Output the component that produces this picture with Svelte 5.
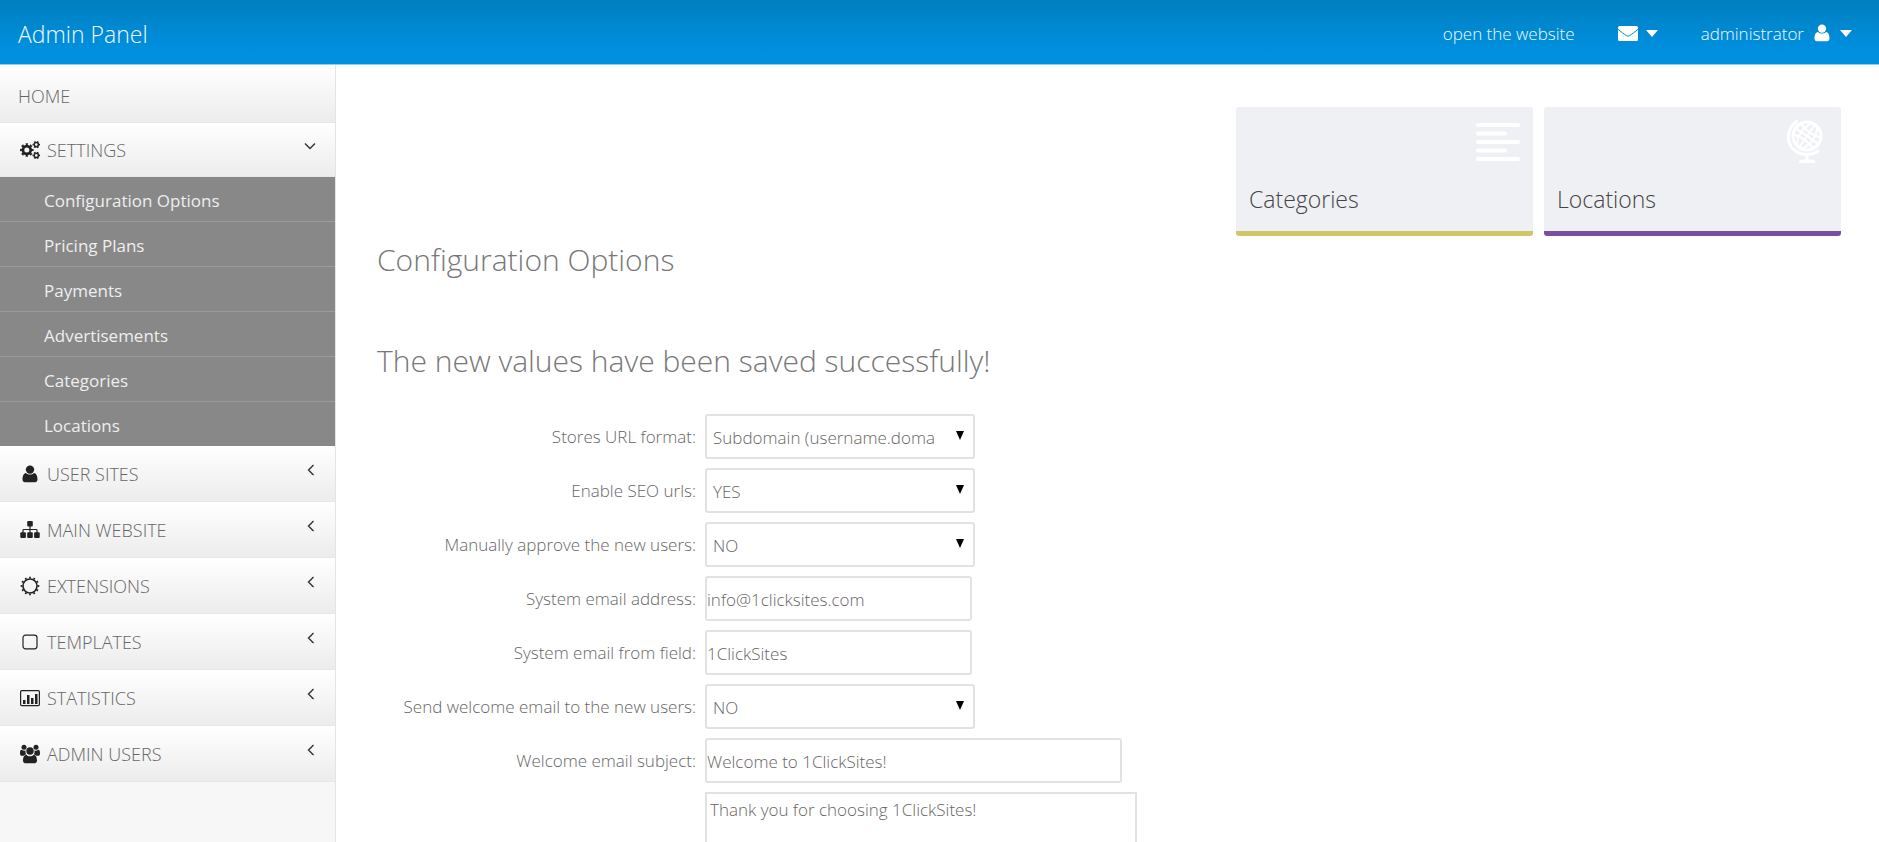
<script>
const subItems = ['Configuration Options', 'Pricing Plans', 'Payments', 'Advertisements', 'Categories', 'Locations'];
const menu = [
    { icon: 'user', title: 'USER SITES' },
    { icon: 'sitemap', title: 'MAIN WEBSITE' },
    { icon: 'ring', title: 'EXTENSIONS' },
    { icon: 'square', title: 'TEMPLATES' },
    { icon: 'chart', title: 'STATISTICS' },
    { icon: 'group', title: 'ADMIN USERS' }
];
const fields = [
    { id: 'url_format', label: 'Stores URL format:', type: 'select', value: 'Subdomain (username.domain.com)' },
    { id: 'seo', label: 'Enable SEO urls:', type: 'select', value: 'YES' },
    { id: 'approve', label: 'Manually approve the new users:', type: 'select', value: 'NO' },
    { id: 'email', label: 'System email address:', type: 'text', value: 'info@1clicksites.com' },
    { id: 'from', label: 'System email from field:', type: 'text', value: '1ClickSites' },
    { id: 'send_welcome', label: 'Send welcome email to the new users:', type: 'select', value: 'NO' },
    { id: 'subject', label: 'Welcome email subject:', type: 'text', wide: true, value: 'Welcome to 1ClickSites!' },
    { id: 'message', label: '', type: 'textarea', value: 'Thank you for choosing 1ClickSites!' }
];
</script>

{#snippet icon(name)}
    <svg class="icon" viewBox="0 0 20 20" aria-hidden="true">
        {#if name === 'user'}
            <circle cx="10" cy="5.6" r="4.2" />
            <path d="M6 9C3.300 9.600 2.500 12.400 2.500 15.400c0 1.600 1 2.800 2.500 2.800h10c1.500 0 2.500-1.200 2.500-2.800 0-3-.8-5.800-3.500-6.400-2.300 2-5.700 2-8 0z" />
        {:else if name === 'sitemap'}
            <rect x="7.200" y="1" width="5.600" height="5.600" rx="1" />
            <rect x="0.300" y="12.300" width="5.600" height="5.600" rx="1" />
            <rect x="7.200" y="12.300" width="5.600" height="5.600" rx="1" />
            <rect x="14.100" y="12.300" width="5.600" height="5.600" rx="1" />
            <path class="line" d="M10 6v7M3 13V10.300q0-.8.8-.8h12.400q.8 0 .8.8V13" />
        {:else if name === 'ring'}
            <circle class="line" cx="10" cy="10" r="7" stroke-width="1.6" />
            <circle class="line" cx="10" cy="10" r="8.4" stroke-width="1.8" pathLength="120" stroke-dasharray="4 6" stroke-dashoffset="2" />
        {:else if name === 'square'}
            <rect class="line" x="3" y="3.200" width="14" height="13.600" rx="2.5" />
        {:else if name === 'chart'}
            <rect class="line" x=".6" y="2.600" width="18.800" height="15" rx="1.2" />
            <path d="M3 12h2.500v4H3zM7 7h2.500v9H7zM11 10h2.500v6H11zM15 6h2.500v10H15z" />
        {:else if name === 'group'}
            <circle cx="4" cy="3.200" r="2.5" />
            <circle cx="16" cy="3.200" r="2.5" />
            <circle cx="10" cy="7" r="3.7" />
            <path d="M0 9.500C0 7.500.3 5.800 1.600 5.800c1.300 1 3 1 4 .8-.5 1.500 0 3 .9 4-1.200 0-2 .4-2.700 1.200H1.800C.7 11.800 0 11 0 9.500zM20 9.500c0-2-.3-3.700-1.600-3.700-1.300 1-3 1-4 .8.5 1.500 0 3-.9 4 1.200 0 2 .4 2.700 1.200h2c1.100 0 1.800-.8 1.800-2.300z" />
            <path d="M6.200 10.800C3.800 11.200 3 14 3 16.500 3 18.200 4 19.300 5.600 19.300h8.800c1.600 0 2.600-1.100 2.600-2.800 0-2.500-.8-5.300-3.200-5.700-2.200 2-5.400 2-7.600 0z" />
        {:else if name === 'cogs'}
            <circle class="line" cx="6.800" cy="10" r="3.9" stroke-width="2.800" />
            <circle class="line" cx="6.800" cy="10" r="5.8" stroke-width="2" pathLength="80" stroke-dasharray="5 5" stroke-dashoffset="2.5" />
            <circle class="line" cx="16.300" cy="4.600" r="2.1" stroke-width="1.5" />
            <circle class="line" cx="16.300" cy="4.600" r="3.2" stroke-width="1.200" pathLength="60" stroke-dasharray="5 5" stroke-dashoffset="2.5" />
            <circle class="line" cx="16.300" cy="15.400" r="2.1" stroke-width="1.5" />
            <circle class="line" cx="16.300" cy="15.400" r="3.2" stroke-width="1.200" pathLength="60" stroke-dasharray="5 5" stroke-dashoffset="2.5" />
        {/if}
    </svg>
{/snippet}

<header>
    <a class="brand" href="#home">Admin Panel</a>
    <nav class="top-links">
        <a href="#website">open the website</a>
        <button aria-label="Messages">
            <svg width="20" height="15" viewBox="0 0 20 15">
                <rect width="20" height="15" rx="1.5" />
                <path class="fold" d="M0 3.200C3 6 6.500 8.200 8.500 9.700q1.500 1 3 0C13.500 8.200 17 6 20 3.200" />
            </svg>
            <span class="caret"></span>
        </button>
        <button>
            administrator
            {@render icon('user')}
            <span class="caret"></span>
        </button>
    </nav>
</header>

<div class="page">
    <aside>
        <a class="item home" href="#home">HOME</a>
        <button class="item open">
            {@render icon('cogs')}
            SETTINGS
            <svg class="arrow" viewBox="0 0 12 12"><path d="M1 3.500l5 5 5-5" /></svg>
        </button>
        <ul>
            {#each subItems as item}
            <li><a href="#{item}">{item}</a></li>
            {/each}
        </ul>
        {#each menu as item}
        <button class="item">
            {@render icon(item.icon)}
            {item.title}
            <svg class="arrow" viewBox="0 0 12 12"><path d="M9.500 1l-5 5 5 5" /></svg>
        </button>
        {/each}
    </aside>

    <main>
        <div class="tiles">
            <a class="tile yellow" href="#categories">
                <svg viewBox="0 0 44 44">
                    <path class="lines" d="M2 6h40M2 14.500h27M2 23h40M2 31.500h27M2 40h40" />
                </svg>
                <span>Categories</span>
            </a>
            <a class="tile purple" href="#locations">
                <svg viewBox="0 0 44 44">
                    <circle class="globe" cx="23" cy="17" r="14" />
                    <g class="grid" transform="rotate(35 23 17)">
                        <ellipse cx="23" cy="17" rx="7" ry="14" />
                        <path d="M23 3v28M9 17h28M11 10.500q12 4 24 0M11 23.500q12-4 24 0" />
                    </g>
                    <path class="stand" d="M12.500 2.500C2 10 2 25 11 31.500c7 5.500 17 5 23 .5M23 36v5" />
                    <path class="base" d="M15 44q0-3.500 3.500-3.500h9.500q3.500 0 3.500 3.500z" />
                </svg>
                <span>Locations</span>
            </a>
        </div>

        <h2>Configuration Options</h2>
        <h2>The new values have been saved successfully!</h2>

        <form>
            {#each fields as field}
            <div class="row">
                <label for={field.id}>{field.label}</label>
                {#if field.type === 'select'}
                <div class="select">
                    <select id={field.id}>
                        <option>{field.value}</option>
                    </select>
                </div>
                {:else if field.type === 'text'}
                <input id={field.id} type="text" class:wide={field.wide} value={field.value}>
                {:else}
                <textarea id={field.id} aria-label="Welcome email message" value={field.value}></textarea>
                {/if}
            </div>
            {/each}
        </form>
    </main>
</div>

<style>
:global(body) {
    background: #fff;
    color: #666;
    font-family: "Open Sans", "Noto Sans", sans-serif;
    font-size: 17px;
    font-weight: 300;
}

:global(#app) {
    height: 100vh;
    display: flex;
    flex-direction: column;
    overflow: hidden;
}

a {
    color: inherit;
    text-decoration: none;
}

button, input, select, textarea {
    font: inherit;
    color: inherit;
    box-sizing: border-box;
}

button {
    background: none;
    border: 0;
    padding: 0;
    cursor: pointer;
}

.icon {
    width: 20px;
    height: 20px;
    fill: #222;
    stroke-width: 1.2;
}

.line {
    fill: none;
    stroke: #222;
}

header {
    display: flex;
    justify-content: space-between;
    align-items: center;
    flex: none;
    height: 64px;
    padding: 0 27px 0 18px;
    border-bottom: 1px solid #8fd0f2;
    background: linear-gradient(#007fbf, #0090e0 80%);
    color: #f0faff;
}

.brand {
    font-size: 23px;
    padding-top: 4px;
}

.top-links {
    display: flex;
    align-items: center;
    gap: 43px;
    padding-top: 2px;
}

.top-links button {
    display: flex;
    align-items: center;
    gap: 8px;
}

.top-links svg {
    fill: #fff;
}

.fold {
    fill: none;
    stroke: #0089d2;
}

.caret {
    border: 6px solid transparent;
    border-top: 7px solid #fff;
    border-bottom: 0;
}

.page {
    display: flex;
    flex: 1;
    min-height: 0;
}

aside {
    flex: none;
    width: 335px;
    border-right: 1px solid #e4e4e4;
    background: #f7f7f7;
}

.item {
    display: flex;
    align-items: center;
    gap: 7px;
    width: 100%;
    height: 56px;
    padding: 1px 19px 0 20px;
    box-sizing: border-box;
    border-bottom: 1px solid #e7e7e7;
    background: linear-gradient(#fff, #ececec);
    font-size: 18px;
    text-align: left;
}

.home {
    height: 58px;
    padding: 4px 18px 0;
}

.open {
    height: 54px;
}

.arrow {
    width: 12px;
    height: 12px;
    margin: 0 0 8px auto;
    fill: none;
    stroke: #333;
    stroke-width: 1.4;
}

ul {
    list-style: none;
    margin: 0;
    padding: 0;
    background: #888;
    color: #eee;
    font-weight: 400;
}

li {
    height: 45px;
    padding: 1px 0 0 44px;
    box-sizing: border-box;
    border-bottom: 1px solid #9b9b9b;
    line-height: 45px;
}

li:last-child {
    height: 44px;
    border-bottom: 0;
}

main {
    flex: 1;
    padding: 42px 38px 0 41px;
}

.tiles {
    display: flex;
    justify-content: flex-end;
    gap: 11px;
    margin-bottom: 2px;
}

.tile {
    display: flex;
    flex-direction: column;
    justify-content: space-between;
    width: 297px;
    height: 129px;
    padding: 12px 13px 17px;
    box-sizing: border-box;
    border-bottom: 5px solid;
    border-radius: 3px;
    background: #eff0f4;
    font-size: 23px;
    line-height: 30px;
}

.tile span {
    color: #444;
}

.tile svg {
    width: 44px;
    height: 44px;
    align-self: flex-end;
    fill: none;
    stroke: #fff;
    stroke-linecap: round;
}

.yellow {
    border-color: #d1c667;
}

.purple {
    border-color: #7a4f9d;
}

.lines {
    stroke-width: 4;
}

.globe, .stand {
    stroke-width: 3;
}

.grid {
    stroke-width: 2;
}

.base {
    fill: #fff;
    stroke: none;
}

h2 {
    margin: 0 0 57px;
    font-size: 30px;
    font-weight: 300;
    line-height: 44px;
    color: #777;
}

form {
    display: flex;
    flex-direction: column;
    gap: 9px;
    margin-top: -26px;
}

.row {
    display: flex;
    align-items: flex-start;
    gap: 9px;
}

label {
    width: 319px;
    text-align: right;
    line-height: 46px;
    height: 45px;
}

input, select, textarea {
    display: block;
    height: 45px;
    margin: 0;
    border: 2px solid #e2e2e2;
    border-radius: 3px;
    background: #fff;
    outline: 0;
}

input {
    width: 267px;
    padding: 2px 0 0;
}

.wide {
    width: 417px;
}

.select {
    position: relative;
}

.select::after {
    content: '';
    position: absolute;
    right: 11px;
    top: 17px;
    border: 4px solid transparent;
    border-top: 9px solid #000;
    border-bottom: 0;
    pointer-events: none;
}

select {
    appearance: none;
    width: 270px;
    padding: 2px 39px 0 6px;
}

textarea {
    width: 432px;
    height: 160px;
    padding: 4px 3px;
    border-radius: 0;
    resize: none;
}
</style>
